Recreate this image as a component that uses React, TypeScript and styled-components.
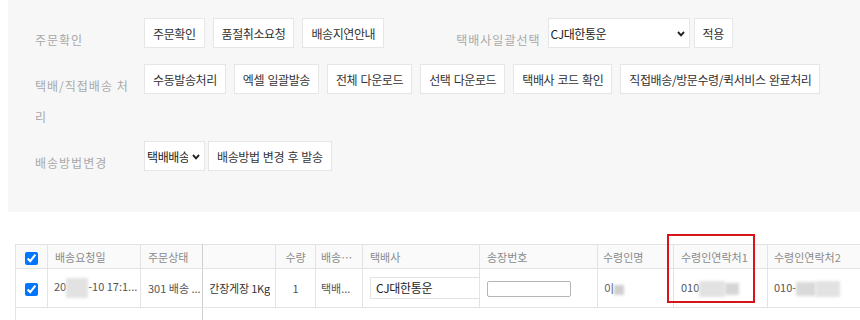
import styled, { createGlobalStyle } from "styled-components";

const GlobalStyle = createGlobalStyle`
  html, body {
    margin: 0;
    overflow: hidden;
    background: #fff;
  }
  body {
    font-family: "Noto Sans CJK KR", "Liberation Sans", sans-serif;
  }
`;

// Layout
const Page = styled.div`
  padding-left: 8px;
  width: 1000px;
`;

const Panel = styled.section`
  background: #f7f7f7;
  padding: 18px 0 34px 27px;
`;

const Row = styled.div`
  display: flex;
  align-items: flex-start;
  margin-bottom: 9px;

  &:last-child {
    margin-bottom: 0;
  }
`;

const Label = styled.div<{ $gap?: number }>`
  flex-shrink: 0;
  width: 96px;
  margin-left: ${(p) => p.$gap ?? 0}px;
  margin-right: 13px;
  padding-top: 6px;
  line-height: 31px;
  font-size: 12px;
  letter-spacing: 1px;
  word-break: break-all;
  color: #a9a9a9;
`;

const SideLabel = styled(Label)`
  width: auto;
  margin-right: 7px;
`;

const Group = styled.div<{ $gap?: number }>`
  display: flex;
  flex-wrap: nowrap;
  gap: ${(p) => p.$gap ?? 8}px;
`;

const Button = styled.button`
  height: 30px;
  padding: 0 8px;
  background: #fff;
  border: 1px solid #e6e6e6;
  font-family: inherit;
  font-size: 12px;
  letter-spacing: -0.4px;
  word-spacing: 1px;
  color: #333;
  white-space: nowrap;
  cursor: pointer;
`;

const SelectWrap = styled.label<{ $width: number }>`
  position: relative;
  display: inline-flex;
  width: ${(p) => p.$width}px;
  height: 30px;
  box-sizing: border-box;
  background: #fff;
  border: 1px solid #e6e6e6;

  select {
    appearance: none;
    width: 100%;
    height: 100%;
    border: 0;
    background: transparent;
    padding: 0 16px 0 2px;
    font-family: inherit;
    font-size: 12px;
    letter-spacing: -0.4px;
    color: #222;
    outline: none;
  }

  svg {
    position: absolute;
    right: 4px;
    top: 12px;
    pointer-events: none;
  }
`;

const Chevron = () => (
  <svg width="8" height="6" viewBox="0 0 8 6">
    <polyline points="1,1 4,4.3 7,1" fill="none" stroke="#222" strokeWidth="1.9" />
  </svg>
);

// Table
const TableWrap = styled.div`
  position: relative;
  margin: 32px 0 0 7px;
`;

const Grid = styled.table`
  border-collapse: collapse;
  table-layout: fixed;
  width: 862px;
  font-size: 11px;
`;

const HeadRow = styled.tr`
  height: 24px;
`;

const BodyRow = styled.tr`
  height: 39px;
`;

const EmptyRow = styled.tr`
  height: 20px;
`;

const Th = styled.th<{ $align?: string; $frozen?: boolean }>`
  padding: 0 7px;
  background: #fafafa;
  border: 1px solid #e3e3e3;
  ${(p) => (p.$frozen ? "border-right-color: #cfcfcf;" : "")}
  font-weight: normal;
  color: #8a8a8a;
  text-align: ${(p) => p.$align ?? "left"};
  white-space: nowrap;
  overflow: hidden;
  text-overflow: ellipsis;
`;

const Td = styled.td<{ $align?: string; $frozen?: boolean }>`
  padding: 0 7px;
  border: 1px solid #e3e3e3;
  ${(p) => (p.$frozen ? "border-right-color: #cfcfcf;" : "")}
  color: #555;
  text-align: ${(p) => p.$align ?? "left"};
  white-space: nowrap;
  overflow: hidden;
`;

const EmptyTd = styled.td<{ $left?: boolean; $frozen?: boolean }>`
  padding: 0;
  border-left: ${(p) => (p.$left ? "1px solid #e3e3e3" : "0")};
  border-right: ${(p) => (p.$frozen ? "1px solid #cfcfcf" : "0")};
`;

const ClipEnd = styled.div`
  display: flex;
  justify-content: flex-end;
  overflow: hidden;
  white-space: nowrap;
  letter-spacing: -0.2px;
  color: #333;
`;

const Check = styled.input`
  margin: 0;
  width: 13px;
  height: 13px;
  vertical-align: middle;
`;

const CarrierInput = styled.div`
  width: 130px;
  height: 22px;
  box-sizing: border-box;
  border: 1px solid #e3e3e3;
  padding: 0 5px;
  line-height: 20px;
  font-size: 12px;
  letter-spacing: -0.3px;
  color: #222;
  background: #fff;
`;

const InvoiceInput = styled.input`
  width: 84px;
  height: 16px;
  box-sizing: border-box;
  border: 1px solid #b5b5b5;
  border-radius: 2px;
  padding: 0 4px;
  vertical-align: middle;
`;

const Blur = styled.span<{ $w: number; $h: number; $tone?: string }>`
  display: inline-block;
  width: ${(p) => p.$w}px;
  height: ${(p) => p.$h}px;
  background: ${(p) => p.$tone ?? "#e2e2e2"};
  filter: blur(1.4px);
  vertical-align: middle;
`;

const Highlight = styled.div`
  position: absolute;
  left: 652px;
  top: -10px;
  width: 88px;
  height: 69px;
  box-sizing: border-box;
  border: 2px solid #d7141a;
  pointer-events: none;
`;

const colWidths = [32, 93, 62, 73, 40, 47, 117, 118, 76, 94, 110];

export default function App() {
  return (
    <>
      <GlobalStyle />
      <Page>
        <Panel>
          <Row>
            <Label>주문확인</Label>
            <Group>
              <Button>주문확인</Button>
              <Button>품절취소요청</Button>
              <Button>배송지연안내</Button>
            </Group>
            <SideLabel $gap={72}>택배사일괄선택</SideLabel>
            <Group $gap={4}>
              <SelectWrap $width={142}>
                <select defaultValue="cj">
                  <option value="cj">CJ대한통운</option>
                  <option value="hanjin">한진택배</option>
                  <option value="lotte">롯데택배</option>
                </select>
                <Chevron />
              </SelectWrap>
              <Button>적용</Button>
            </Group>
          </Row>
          <Row>
            <Label>택배/직접배송 처리</Label>
            <Group>
              <Button>수동발송처리</Button>
              <Button>엑셀 일괄발송</Button>
              <Button>전체 다운로드</Button>
              <Button>선택 다운로드</Button>
              <Button>택배사 코드 확인</Button>
              <Button>직접배송/방문수령/퀵서비스 완료처리</Button>
            </Group>
          </Row>
          <Row>
            <Label>배송방법변경</Label>
            <Group $gap={3}>
              <SelectWrap $width={61}>
                <select defaultValue="parcel">
                  <option value="parcel">택배배송</option>
                  <option value="direct">직접배송</option>
                </select>
                <Chevron />
              </SelectWrap>
              <Button>배송방법 변경 후 발송</Button>
            </Group>
          </Row>
        </Panel>

        <TableWrap>
          <Grid>
            <colgroup>
              {colWidths.map((w, i) => (
                <col key={i} style={{ width: w }} />
              ))}
            </colgroup>
            <thead>
              <HeadRow>
                <Th $align="center" style={{ padding: 0 }}>
                  <Check type="checkbox" defaultChecked />
                </Th>
                <Th>배송요청일</Th>
                <Th $frozen>주문상태</Th>
                <Th></Th>
                <Th $align="center">수량</Th>
                <Th style={{ paddingLeft: 5 }}>배송방법</Th>
                <Th>택배사</Th>
                <Th>송장번호</Th>
                <Th style={{ paddingLeft: 5 }}>수령인명</Th>
                <Th>수령인연락처1</Th>
                <Th style={{ paddingLeft: 6 }}>수령인연락처2</Th>
              </HeadRow>
            </thead>
            <tbody>
              <BodyRow>
                <Td $align="center" style={{ padding: 0 }}>
                  <Check type="checkbox" defaultChecked />
                </Td>
                <Td style={{ paddingLeft: 6 }}>
                  20
                  <Blur $w={22} $h={20} />
                  -10 17:1...
                </Td>
                <Td $frozen>301 배송 ...</Td>
                <Td style={{ paddingRight: 5 }}>
                  <ClipEnd>맛있는 간장게장 1Kg</ClipEnd>
                </Td>
                <Td $align="center">1</Td>
                <Td style={{ paddingLeft: 5 }}>택배...</Td>
                <Td>
                  <CarrierInput>CJ대한통운</CarrierInput>
                </Td>
                <Td>
                  <InvoiceInput type="text" />
                </Td>
                <Td style={{ paddingLeft: 6 }}>
                  이<Blur $w={10} $h={10} $tone="#cfcfcf" />
                </Td>
                <Td>
                  010
                  <Blur $w={26} $h={16} />
                  <Blur $w={14} $h={12} $tone="#d6d6d6" />
                </Td>
                <Td style={{ paddingLeft: 6 }}>
                  010-
                  <Blur $w={20} $h={14} $tone="#d9d9d9" />
                  <Blur $w={24} $h={16} />
                </Td>
              </BodyRow>
              <EmptyRow>
                <EmptyTd $left />
                <EmptyTd />
                <EmptyTd $frozen />
                <EmptyTd />
                <EmptyTd />
                <EmptyTd />
                <EmptyTd />
                <EmptyTd />
                <EmptyTd />
                <EmptyTd />
                <EmptyTd />
              </EmptyRow>
            </tbody>
          </Grid>
          <Highlight />
        </TableWrap>
      </Page>
    </>
  );
}
